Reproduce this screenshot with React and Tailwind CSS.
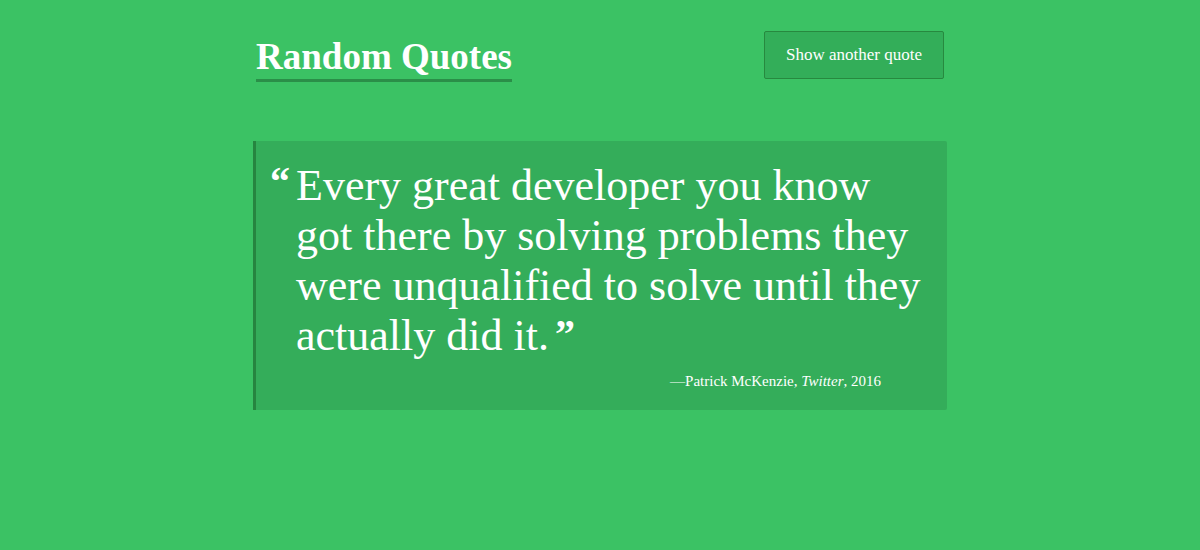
import React from 'react';

const serif = { fontFamily: '"Liberation Serif", "DejaVu Serif", serif' };

export default function App() {
  return (
    <div className="min-h-[550px] w-full bg-[#3bc264] text-white" style={serif}>
      <div className="w-[694px] mx-auto pt-[31px]">
        {/* Header */}
        <div className="flex items-start justify-between">
          <h1 className="ml-[3px] mt-[4px] text-[37px] leading-[44px] font-bold border-b-[3px] border-[#2a8f48]">
            Random Quotes
          </h1>
          <button className="mr-[3px] w-[180px] h-[48px] rounded-[2px] border border-[#27893f] bg-[#33ae59] text-[17px] text-white">
            Show another quote
          </button>
        </div>

        {/* Quote */}
        <blockquote className="mt-[59px] bg-[#34ad5a] border-l-[3px] border-[#268540] rounded-r-[2px] pl-[14px] pr-[16px] pt-[20px] pb-[17px]">
          <div className="flex">
            <span className="text-[40px] leading-[40px] font-bold w-[26px] shrink-0 mt-[1px]">&ldquo;</span>
            <p className="text-[44px] leading-[50px]">
              Every great developer you know<br />
              got there by solving problems they<br />
              were unqualified to solve until they<br />
              actually did it.
              <span className="inline-block align-top text-[40px] leading-none font-bold mt-[3px] ml-[6px]">&rdquo;</span>
            </p>
          </div>
          <p className="mt-[9px] text-right pr-[50px] text-[15px]">
            &mdash;Patrick McKenzie, <em>Twitter</em>, 2016
          </p>
        </blockquote>
      </div>
    </div>
  );
}
